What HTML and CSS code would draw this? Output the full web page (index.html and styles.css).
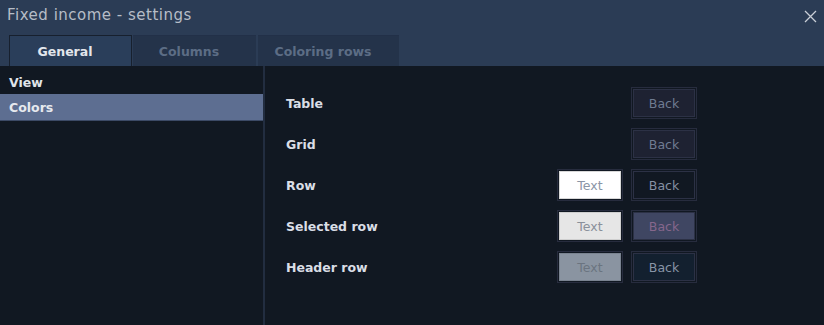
FILE: index.html
```html
<!DOCTYPE html>
<html>
<head>
<meta charset="utf-8">
<link rel="stylesheet" href="styles.css">
</head>
<body>
<div class="dialog">
  <div class="titlebar">
    <div class="title-row">
      <span class="title">Fixed income - settings</span>
      <svg class="close" width="13" height="13" viewBox="0 0 13 13"><path d="M1 1 L12 12 M12 1 L1 12" stroke="#c9ced6" stroke-width="1.3" fill="none"/></svg>
    </div>
    <div class="tabs">
      <div class="tab active">General</div>
      <div class="tab">Columns</div>
      <div class="tab wide">Coloring rows</div>
    </div>
  </div>
  <div class="body">
    <div class="side">
      <div class="side-item">View</div>
      <div class="side-item selected">Colors</div>
    </div>
    <div class="main">
      <div class="row"><span class="label">Table</span><span class="slot"></span><span class="btn back b-table"><span>Back</span></span></div>
      <div class="row"><span class="label">Grid</span><span class="slot"></span><span class="btn back b-table"><span>Back</span></span></div>
      <div class="row"><span class="label">Row</span><span class="btn text t-row"><span>Text</span></span><span class="btn back b-row"><span>Back</span></span></div>
      <div class="row"><span class="label">Selected row</span><span class="btn text t-sel"><span>Text</span></span><span class="btn back b-sel"><span>Back</span></span></div>
      <div class="row"><span class="label">Header row</span><span class="btn text t-head"><span>Text</span></span><span class="btn back b-head"><span>Back</span></span></div>
    </div>
  </div>
</div>
</body>
</html>
```
FILE: styles.css
```css
* { box-sizing: border-box; }
html, body { margin: 0; padding: 0; }
body {
  width: 824px;
  height: 325px;
  overflow: hidden;
  background: #111822;
  font-family: "DejaVu Sans", Verdana, sans-serif;
}
.dialog { display: flex; flex-direction: column; height: 325px; }
.titlebar { background: #2b3c55; height: 66px; display: flex; flex-direction: column; }
.title-row {
  height: 35px;
  display: flex;
  align-items: center;
  justify-content: space-between;
  padding: 0 7px 5px 7px;
}
.title { color: #b6bdc7; font-size: 15px; letter-spacing: 0.5px; }
.close { margin-top: 3px; }
.tabs { display: flex; padding-left: 9px; gap: 1px; height: 31px; align-items: flex-end; }
.tab {
  width: 123px;
  height: 31px;
  padding-right: 11px;
  background: #24334a;
  color: #5c6d85;
  font-size: 12.5px;
  font-weight: bold;
  display: flex;
  align-items: center;
  justify-content: center;
  border-top: 1px solid #223048;
}
.tab.wide { width: 141px; margin-left: 1px; }
.tab.active {
  width: 123px;
  background: #2a3e5a;
  color: #e2e6ec;
  border: 1px solid #17202e;
  border-bottom: none;
}
.body { flex: 1; display: flex; }
.side { width: 265px; border-right: 2px solid #222d40; padding-top: 4px; }
.side-item {
  height: 24px;
  padding-left: 9px;
  color: #e0e4ea;
  font-size: 12.5px;
  font-weight: bold;
  display: flex;
  align-items: center;
}
.side-item.selected {
  height: 27px;
  background: #5d6e91;
  border-bottom: 1px solid #3c4a66;
  color: #e6e9ee;
}
.main { flex: 1; padding: 21px 0 0 21px; display: flex; flex-direction: column; gap: 9px; }
.row { display: flex; align-items: center; height: 32px; }
.label { width: 271px; color: #dadee6; font-size: 12.5px; font-weight: bold; }
.slot { width: 66px; margin-right: 8px; }
.btn {
  width: 66px;
  height: 32px;
  border: 1px solid #272c3e;
  padding: 1px;
  background: #111822;
  display: flex;
}
.btn.text { margin-right: 8px; }
.btn span {
  flex: 1;
  display: flex;
  align-items: center;
  justify-content: center;
  font-size: 12.5px;
  border: 1px solid #2c3145;
}
.b-table span { background: #1e2232; color: #6f7b91; }
.b-row span { background: #111822; color: #8590a3; }
.b-sel span { background: #3f4662; color: #86678c; }
.b-head span { background: #13202f; color: #8894a6; }
.t-row span { background: #ffffff; color: #8b95a6; border-color: #d8d8d8; }
.t-sel span { background: #e6e6e6; color: #8a909a; border-color: #cfcfcf; }
.t-head span { background: #8a94a1; color: #6b7480; border-color: #7a8390; }
```
